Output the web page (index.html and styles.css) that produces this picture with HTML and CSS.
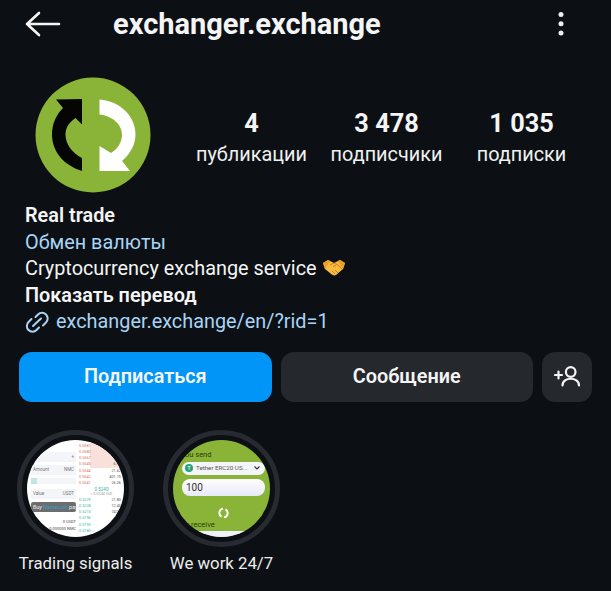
FILE: index.html
```html
<!DOCTYPE html>
<html lang="en">
<head>
  <meta charset="UTF-8">
  <meta name="viewport" content="width=device-width, initial-scale=1.0">
  <title>exchanger.exchange</title>
  <link rel="stylesheet" href="styles.css">
</head>
<body>

  <header class="topbar">
    <svg class="back-icon" width="38" height="28" viewBox="0 0 38 28">
      <path d="M15 3 L3 14 L15 25 M3 14 H35" fill="none" stroke="#f5f5f5" stroke-width="2.6" stroke-linecap="round" stroke-linejoin="round"/>
    </svg>
    <h1 class="username">exchanger.exchange</h1>
    <svg class="more-icon" width="6" height="24" viewBox="0 0 6 24">
      <circle cx="3" cy="2.5" r="2.5" fill="#eee"/>
      <circle cx="3" cy="11.8" r="2.5" fill="#eee"/>
      <circle cx="3" cy="21.1" r="2.5" fill="#eee"/>
    </svg>
  </header>

  <section class="profile">
    <svg class="avatar" width="116" height="116" viewBox="0 0 116 116">
      <circle cx="58" cy="58" r="57.5" fill="#8ab438"/>
      <path d="M21 22.5 L47 22 V47.5 L40.5 41 C33 46 30.5 52 30.5 57.5 C30.5 67 37 76 47 81 V94 C28 88 17 74 17 57.5 C17 47 21 38 28 31 Z" fill="#050505"/>
      <path d="M64.5 22.5 C85 24 100.5 39 100.5 57.5 C100.5 68 95 77 87 84 L95 94 H64.5 V69 L76 76 C83 72 87 65 87 57.5 C87 47 77 39 64.5 37.5 Z" fill="#fff"/>
    </svg>
    <div class="stats">
      <div class="stat"><strong>4</strong><span>публикации</span></div>
      <div class="stat"><strong>3 478</strong><span>подписчики</span></div>
      <div class="stat"><strong>1 035</strong><span>подписки</span></div>
    </div>
  </section>

  <section class="bio">
    <p class="bio-name">Real trade</p>
    <p class="bio-category">Обмен валюты</p>
    <p class="bio-text">Cryptocurrency exchange service
      <svg class="handshake" width="22" height="16" viewBox="0 0 22 16">
        <path d="M0 3 L5 0 L11 3 L17 0 L22 3 L20 9 L13 15 C11 16 9 15 7 13 L2 9 Z" fill="#f7bb41"/>
        <path d="M0 3 L5 0 L7 1 L2 9 Z M22 3 L17 0 L15 1 L20 9 Z" fill="#e99f24"/>
        <path d="M7 5 L11 3 L15 5 L19 9 M10 7 L13 5 M12 10 L15 13 M9 11 L12 14" fill="none" stroke="#c77f1c" stroke-width="1"/>
      </svg>
    </p>
    <p class="bio-name">Показать перевод</p>
    <p class="bio-link">
      <svg width="24" height="22" viewBox="0 0 24 22" fill="none" stroke="#a8d4f5" stroke-width="2" stroke-linecap="round">
        <path d="M6.5 8 L3.5 11 A5.6 5.6 0 0 0 11.5 19 L14 16.5"/>
        <path d="M10.5 6 L13 3.5 A5.6 5.6 0 0 1 21 11.5 L18 14.5"/>
        <path d="M8 15 L16 7.5"/>
      </svg>
      <span>exchanger.exchange/en/?rid=1</span>
    </p>
  </section>

  <div class="actions">
    <button class="btn btn-primary">Подписаться</button>
    <button class="btn btn-dark">Сообщение</button>
    <button class="btn btn-dark btn-icon">
      <svg width="27" height="24" viewBox="0 0 27 24" fill="none" stroke="#f5f5f5" stroke-width="2.2" stroke-linecap="round">
        <circle cx="16.7" cy="8" r="4.8"/>
        <path d="M8.5 21.5 C8.5 12.5 25 12.5 25 21.5"/>
        <path d="M1 11 H8 M4.5 7.5 V14.5"/>
      </svg>
    </button>
  </div>

  <section class="highlights">
    <div class="highlight">
      <div class="ring">
        <div class="thumb thumb-trade">
          <div class="trade-form">
            <div class="trade-row"><span>-</span><span>+</span></div>
            <div class="trade-row"><span>Amount</span><span>NMC</span></div>
            <div class="trade-slider"></div>
            <div class="trade-row"><span>Value</span><span>USDT</span></div>
            <div class="trade-buy">Buy <b>Namecoin</b> pays</div>
            <div class="trade-total">0 USDT</div>
            <div class="trade-total">0.000000 NMC</div>
          </div>
          <div class="trade-book">
            <div class="book-asks">
              <div><span>0.5581</span></div>
              <div><span>0.5580</span></div>
              <div><span>0.5567</span></div>
              <div><span>0.5545</span><span>6.82</span></div>
              <div><span>0.5544</span><span>21.62</span></div>
              <div><span>0.5542</span><span>401.75</span></div>
              <div><span>0.5541</span><span>26.26</span></div>
            </div>
            <div class="book-mid">0.5240<small>≈ 0.52240 USD</small></div>
            <div class="book-bids">
              <div><span>0.5229</span><span>21.80</span></div>
              <div><span>0.5228</span><span>12.45</span></div>
              <div><span>0.5210</span><span>747.3</span></div>
              <div><span>0.5196</span></div>
              <div><span>0.5193</span></div>
              <div><span>0.5180</span></div>
            </div>
          </div>
        </div>
      </div>
      <span class="highlight-label">Trading signals</span>
    </div>
    <div class="highlight">
      <div class="ring">
        <div class="thumb thumb-send">
          <div class="send-title">ou send</div>
          <div class="send-select">
            <i class="tether">T</i><span>Tether ERC20 US...</span>
            <svg width="6" height="4" viewBox="0 0 6 4" fill="none" stroke="#333" stroke-width="1.1"><path d="M0.5 0.5 L3 3 L5.5 0.5"/></svg>
          </div>
          <div class="send-input">100</div>
          <svg class="send-icon" width="11" height="12" viewBox="0 0 13 15" fill="none" stroke="#fff" stroke-width="2.4">
            <path d="M6 2 A5.4 5.4 0 0 0 4 12"/>
            <path d="M7 13 A5.4 5.4 0 0 0 9 3"/>
          </svg>
          <div class="send-title send-receive">u receive</div>
          <div class="send-bottom"></div>
        </div>
      </div>
      <span class="highlight-label">We work 24/7</span>
    </div>
  </section>

</body>
</html>
```

FILE: styles.css
```css
body {
  font-family: Roboto, 'Liberation Sans', sans-serif;
  background-color: #0c1014;
  color: #f5f5f5;
  margin: 0;
  height: 591px;
  overflow: hidden;
}

p {
  margin: 0;
}

/* Top bar */
.topbar {
  display: flex;
  align-items: center;
  height: 48px;
  padding: 0 47px 0 24px;
}

.username {
  flex: 1;
  margin: 0 0 0 51px;
  font-size: 29px;
  font-weight: 700;
  color: #f5f5f5;
}

.more-icon {
  flex: none;
}

/* Avatar + counters */
.profile {
  display: flex;
  margin-top: 29px;
  padding-left: 35px;
}

.stats {
  display: flex;
  padding-top: 32px;
  margin-left: 33px;
}

.stat {
  display: flex;
  flex-direction: column;
  align-items: center;
  gap: 5px;
  width: 135px;
}

.stat strong {
  font-size: 25.3px;
  font-weight: 700;
  line-height: 29px;
}

.stat span {
  font-size: 19.85px;
  line-height: 24px;
  color: #f0f0f0;
}

/* Bio */
.bio {
  margin-top: 10px;
  padding-left: 25px;
  font-size: 19.85px;
  line-height: 26.5px;
}

.bio-name {
  font-weight: 600;
  color: #f5f5f5;
}

.bio-category {
  color: #a8d4f5;
}

.handshake {
  vertical-align: -1px;
  margin-left: 1px;
}

.bio-link {
  display: flex;
  align-items: center;
  gap: 7px;
  color: #a8d4f5;
}

/* Buttons */
.actions {
  display: flex;
  gap: 9px;
  margin-top: 16px;
  padding: 0 19px;
}

.btn {
  flex: 1;
  height: 50px;
  border: none;
  border-radius: 13px;
  font-family: inherit;
  font-size: 19.85px;
  font-weight: 600;
  color: #f5f5f5;
}

.btn-primary {
  background-color: #0095f6;
}

.btn-dark {
  background-color: #25282d;
}

.btn-icon {
  flex: none;
  width: 50px;
  padding: 3px 0 0;
}

/* Highlights */
.highlights {
  display: flex;
  gap: 29px;
  margin-top: 28px;
  padding-left: 17px;
}

.highlight {
  display: flex;
  flex-direction: column;
  align-items: center;
  width: 117px;
}

.ring {
  flex: none;
  width: 117px;
  height: 117px;
  box-sizing: border-box;
  padding: 5px;
  border: 5px solid #272b31;
  border-radius: 50%;
}

.thumb {
  height: 100%;
  border-radius: 50%;
  overflow: hidden;
}

.highlight-label {
  margin-top: 6px;
  font-size: 16.8px;
  line-height: 20px;
  white-space: nowrap;
  color: #ececec;
}

/* Trading thumbnail */
.thumb-trade {
  display: flex;
  background-color: #fff;
  font-size: 4.5px;
  line-height: 6px;
}

.trade-form {
  flex: none;
  width: 52px;
  box-sizing: border-box;
  padding: 12px 3px 0 4px;
  color: #777;
}

.trade-row {
  display: flex;
  justify-content: space-between;
  align-items: center;
  height: 10px;
  padding: 0 2px;
  margin-bottom: 3px;
  background-color: #f4f5f8;
}

.trade-slider {
  height: 6px;
  margin: 1px 0 5px;
  border-left: 6px solid #bfe6e4;
  background-color: #f4f5f8;
}

.trade-buy {
  height: 10px;
  margin: 2px 0 7px;
  padding: 0 2px;
  border-radius: 2px;
  background-color: #6d6d6d;
  color: #eee;
  font-size: 5.4px;
  line-height: 10px;
  white-space: nowrap;
}

.trade-buy b {
  color: #2f9fd8;
  font-weight: 400;
}

.trade-total {
  margin-bottom: 1px;
  text-align: right;
  white-space: nowrap;
  font-size: 4px;
  color: #444;
}

.trade-book {
  flex: 1;
  min-width: 0;
  font-size: 3.8px;
  line-height: 6.3px;
}

.book-asks div,
.book-bids div {
  display: flex;
  justify-content: space-between;
  height: 6.3px;
  padding-right: 3px;
}

.book-asks {
  padding-top: 3px;
  color: #e06a5a;
  background: linear-gradient(#f9e0da, #f9e0da) no-repeat right top / 34px 28px;
}

.book-asks span + span,
.book-bids span + span {
  color: #555;
}

.book-mid {
  display: flex;
  flex-direction: column;
  align-items: center;
  height: 10px;
  color: #36b5a5;
  font-size: 4.5px;
  line-height: 5px;
}

.book-mid small {
  font-size: 3.2px;
  color: #999;
}

.book-bids {
  color: #36b5a5;
}

/* Send thumbnail */
.thumb-send {
  background-color: #8ab438;
  font-size: 7.5px;
}

.send-title {
  padding: 10px 0 0 12px;
  line-height: 9px;
  color: #2c3a12;
}

.send-select {
  display: flex;
  align-items: center;
  gap: 3px;
  box-sizing: border-box;
  width: 83px;
  height: 13px;
  margin: 3px 0 0 9px;
  padding: 0 5px 0 3px;
  border-radius: 7px;
  background-color: #f4f5f8;
  color: #555;
  font-size: 6.2px;
  white-space: nowrap;
}

.tether {
  flex: none;
  width: 8px;
  height: 8px;
  border-radius: 50%;
  background-color: #26a17b;
  color: #fff;
  font-size: 6px;
  font-style: normal;
  line-height: 8px;
  text-align: center;
}

.send-select span {
  flex: 1;
}

.send-input {
  box-sizing: border-box;
  width: 83px;
  height: 17px;
  margin: 4px 0 0 9px;
  padding-left: 4px;
  border-radius: 8px;
  background: linear-gradient(#fff, #e8e9f8);
  color: #333;
  font-size: 10px;
  line-height: 17px;
}

.send-icon {
  display: block;
  margin: 11px 0 0 45px;
}

.send-receive {
  padding-top: 1px;
}

.send-bottom {
  height: 6px;
  margin-top: 2px;
  background-color: #f0f1fa;
}
```
